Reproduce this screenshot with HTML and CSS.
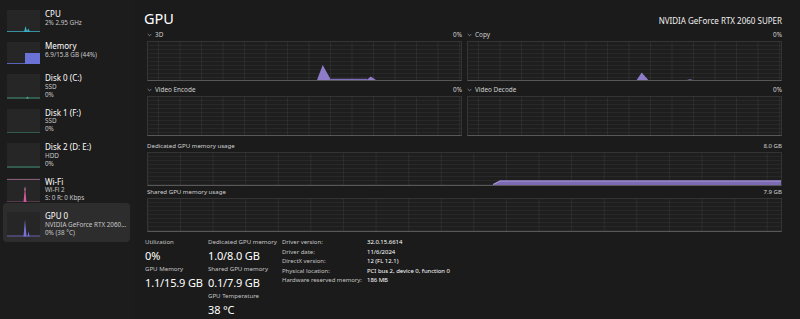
FILE: index.html
```html
<!DOCTYPE html>
<html lang="en">
<head>
<meta charset="utf-8">
<title>Task Manager - GPU</title>
<link rel="stylesheet" href="styles.css">
</head>
<body>
<div class="app">
  <aside class="sidebar">
    <div class="item">
      <div class="thumb">
        <svg viewBox="0 0 33 22" preserveAspectRatio="none"><path d="M0 21.5 H33" stroke="#3a8fa0" stroke-width="1"/><path d="M17 22 L18.5 16 L20 21 L21.5 18.5 L23 22 Z" fill="#3aaec4"/></svg>
      </div>
      <div class="txt"><div class="t">CPU</div><div class="s">2% 2.95 GHz</div></div>
    </div>
    <div class="item">
      <div class="thumb">
        <svg viewBox="0 0 33 22" preserveAspectRatio="none"><path d="M0 21.5 H33" stroke="#5a62b8" stroke-width="1"/><rect x="18" y="11" width="15" height="11" fill="#6b72d6"/></svg>
      </div>
      <div class="txt"><div class="t">Memory</div><div class="s">6.9/15.8 GB (44%)</div></div>
    </div>
    <div class="item">
      <div class="thumb">
        <svg viewBox="0 0 33 24" preserveAspectRatio="none"><path d="M0 23.5 H33" stroke="#3f8f76" stroke-width="1"/><path d="M19 24 L20.5 22 L22 24 Z" fill="#4fb08a"/></svg>
      </div>
      <div class="txt"><div class="t">Disk 0 (C:)</div><div class="s">SSD</div><div class="s">0%</div></div>
    </div>
    <div class="item">
      <div class="thumb">
        <svg viewBox="0 0 33 24" preserveAspectRatio="none"><path d="M0 23.5 H33" stroke="#3f8f76" stroke-width="1"/></svg>
      </div>
      <div class="txt"><div class="t">Disk 1 (F:)</div><div class="s">SSD</div><div class="s">0%</div></div>
    </div>
    <div class="item">
      <div class="thumb">
        <svg viewBox="0 0 33 24" preserveAspectRatio="none"><path d="M0 23.5 H33" stroke="#3f8f76" stroke-width="1"/></svg>
      </div>
      <div class="txt"><div class="t">Disk 2 (D: E:)</div><div class="s">HDD</div><div class="s">0%</div></div>
    </div>
    <div class="item">
      <div class="thumb">
        <svg viewBox="0 0 33 24" preserveAspectRatio="none"><path d="M0 1.5 H33" stroke="#8a5a78" stroke-width="1"/><path d="M0 23.5 H33" stroke="#8a4a70" stroke-width="1"/><path d="M16.5 24 L18 8 L19.5 24 Z" fill="#d2589c"/><path d="M17.6 12 L18 8 L18.4 12 Z" fill="#f3d6e6"/></svg>
      </div>
      <div class="txt"><div class="t">Wi-Fi</div><div class="s">Wi-Fi 2</div><div class="s">S: 0 R: 0 Kbps</div></div>
    </div>
    <div class="item selected">
      <div class="thumb">
        <svg viewBox="0 0 33 24" preserveAspectRatio="none"><path d="M0 23.5 H33" stroke="#6a62b0" stroke-width="1"/><path d="M16.5 24 L18 7 L19.5 24 Z" fill="#7a72dc"/><path d="M20.5 24 L21.5 19 L22.5 24 Z" fill="#7a72dc"/></svg>
      </div>
      <div class="txt"><div class="t">GPU 0</div><div class="s">NVIDIA GeForce RTX 2060...</div><div class="s">0% (38 °C)</div></div>
    </div>
  </aside>

  <main class="main">
    <header class="head">
      <h1 class="title">GPU</h1>
      <div class="model">NVIDIA GeForce RTX 2060 SUPER</div>
    </header>

    <div class="pair row1">
      <section class="engine">
        <div class="lbl"><span class="name"><svg class="chev" viewBox="0 0 6 4"><path d="M0.8 0.8 L3 3 L5.2 0.8" fill="none" stroke="#9a9a9a" stroke-width="0.9"/></svg>3D</span><span>0%</span></div>
        <div class="chart small">
          <svg viewBox="0 0 313 38" preserveAspectRatio="none">
            <path d="M183 37.4 H219" stroke="#7d6db8" stroke-width="1.2"/>
            <path d="M169 38 L174.7 23 L183 38 Z" fill="#8e7cc8"/>
            <path d="M218.7 38 L222.7 34.5 L228 38 Z" fill="#8e7cc8"/>
          </svg>
        </div>
      </section>
      <section class="engine">
        <div class="lbl"><span class="name"><svg class="chev" viewBox="0 0 6 4"><path d="M0.8 0.8 L3 3 L5.2 0.8" fill="none" stroke="#9a9a9a" stroke-width="0.9"/></svg>Copy</span><span>0%</span></div>
        <div class="chart small">
          <svg viewBox="0 0 313 38" preserveAspectRatio="none">
            <path d="M168.7 38 L173.7 30.5 L180.3 38 Z" fill="#8e7cc8"/>
            <path d="M219 38 L222 37 L225 38 Z" fill="#6e64a0"/>
          </svg>
        </div>
      </section>
    </div>

    <div class="pair row2">
      <section class="engine">
        <div class="lbl"><span class="name"><svg class="chev" viewBox="0 0 6 4"><path d="M0.8 0.8 L3 3 L5.2 0.8" fill="none" stroke="#9a9a9a" stroke-width="0.9"/></svg>Video Encode</span><span>0%</span></div>
        <div class="chart small"></div>
      </section>
      <section class="engine">
        <div class="lbl"><span class="name"><svg class="chev" viewBox="0 0 6 4"><path d="M0.8 0.8 L3 3 L5.2 0.8" fill="none" stroke="#9a9a9a" stroke-width="0.9"/></svg>Video Decode</span><span>0%</span></div>
        <div class="chart small"></div>
      </section>
    </div>

    <section class="mem dedicated">
      <div class="lbl memlbl"><span>Dedicated GPU memory usage</span><span>8.0 GB</span></div>
      <div class="chart wide">
        <svg viewBox="0 0 633 32" preserveAspectRatio="none">
          <path d="M345 32 L352 27.5 H633 V32 Z" fill="#7d6ab4"/>
          <path d="M345 31.5 L352 28 H633" fill="none" stroke="#a896dc" stroke-width="1.2"/>
        </svg>
      </div>
    </section>

    <section class="mem shared">
      <div class="lbl memlbl"><span>Shared GPU memory usage</span><span>7.9 GB</span></div>
      <div class="chart wide"></div>
    </section>

    <div class="stats">
      <div class="col c1">
        <div class="k">Utilization</div><div class="v">0%</div>
        <div class="k">GPU Memory</div><div class="v">1.1/15.9 GB</div>
      </div>
      <div class="col c2">
        <div class="k">Dedicated GPU memory</div><div class="v">1.0/8.0 GB</div>
        <div class="k">Shared GPU memory</div><div class="v">0.1/7.9 GB</div>
        <div class="k">GPU Temperature</div><div class="v">38 °C</div>
      </div>
      <dl class="props">
        <dt>Driver version:</dt><dd>32.0.15.6614</dd>
        <dt>Driver date:</dt><dd>11/6/2024</dd>
        <dt>DirectX version:</dt><dd>12 (FL 12.1)</dd>
        <dt>Physical location:</dt><dd>PCI bus 2, device 0, function 0</dd>
        <dt>Hardware reserved memory:</dt><dd>186 MB</dd>
      </dl>
    </div>
  </main>
</div>
</body>
</html>
```

FILE: styles.css
```css
* { box-sizing: border-box; }
html, body { margin: 0; padding: 0; }
body {
  background: #1b1b1b;
  color: #ffffff;
  font-family: "Noto Sans", "Open Sans", sans-serif;
  width: 800px;
  height: 319px;
  overflow: hidden;
}
.app { display: flex; height: 319px; }

/* Sidebar */
.sidebar {
  width: 135px;
  flex: none;
  background: #1c1c1c;
  display: flex;
  flex-direction: column;
  padding-top: 5px;
}
.item {
  display: flex;
  gap: 5px;
  margin: 0 5px 0 3px;
  padding: 5px 0 5px 4px;
  border-radius: 4px;
}
.item.selected {
  background: #2d2d2d;
  margin-top: -4px;
  padding-top: 9px;
}
.thumb {
  width: 33px;
  min-height: 22px;
  flex: none;
  background: #262626;
  display: flex;
}
.thumb svg { width: 33px; height: 100%; display: block; }
.txt { display: flex; flex-direction: column; min-width: 0; }
.t { font-size: 8px; line-height: 8.5px; color: #fff; white-space: nowrap; }
.s { font-size: 6.3px; line-height: 8px; color: #c8c8c8; white-space: nowrap; }

/* Main */
.main {
  flex: 1;
  min-width: 0;
  padding: 8px 18px 0 12px;
  display: flex;
  flex-direction: column;
  background: #1b1b1b;
}
.head {
  display: flex;
  justify-content: space-between;
  align-items: baseline;
  height: 20px;
  margin-bottom: 2px;
}
.title {
  margin: 0 0 0 -3px;
  font-size: 14.5px;
  font-weight: 400;
  line-height: 20px;
}
.model { font-size: 8px; color: #f0f0f0; }

.pair { display: grid; grid-template-columns: 1fr 1fr; gap: 5px; }
.row2 { margin-top: 4px; }
.dedicated { margin-top: 5px; }
.shared { margin-top: 1px; }

.lbl {
  height: 10px;
  margin-bottom: 1px;
  display: flex;
  justify-content: space-between;
  align-items: center;
  font-size: 6.4px;
  color: #d0d0d0;
  line-height: 10px;
}
.memlbl { font-size: 6.1px; }
.name { display: flex; align-items: center; }
.chev { width: 5px; height: 4px; margin-right: 3px; }

.chart {
  border: 1px solid #343434;
  border-bottom-color: #585858;
  background-color: #1e1e1e;
  background-image:
    linear-gradient(to right, rgba(255,255,255,0.055) 1px, transparent 1px),
    linear-gradient(to bottom, rgba(255,255,255,0.045) 1px, transparent 1px);
  display: flex;
  align-items: flex-end;
}
.chart svg { width: 100%; height: 100%; display: block; }
.small {
  height: 40px;
  background-size: 21.5px 100%, 100% 4px;
  background-position: 10px 0, 0 3px;
}
.wide {
  height: 34px;
  background-size: 32.6px 100%, 100% 4px;
  background-position: 32px 0, 0 3px;
}

/* Stats */
.stats {
  margin: 5px 0 0 -2px;
  display: flex;
  align-items: flex-start;
}
.col { display: flex; flex-direction: column; }
.c1 { width: 63px; }
.c2 { width: 74px; }
.k { font-size: 6.1px; line-height: 10px; color: #c4c4c4; white-space: nowrap; }
.v { font-size: 11px; letter-spacing: -0.15px; line-height: 17px; color: #fff; white-space: nowrap; }
.props {
  margin: 0;
  display: grid;
  grid-template-columns: 85px auto;
  grid-auto-rows: 9.5px;
  font-size: 5.95px;
  line-height: 9.5px;
  padding-top: 1px;
}
.props dt { color: #c4c4c4; white-space: nowrap; }
.props dd { margin: 0; color: #fff; white-space: nowrap; }
```
